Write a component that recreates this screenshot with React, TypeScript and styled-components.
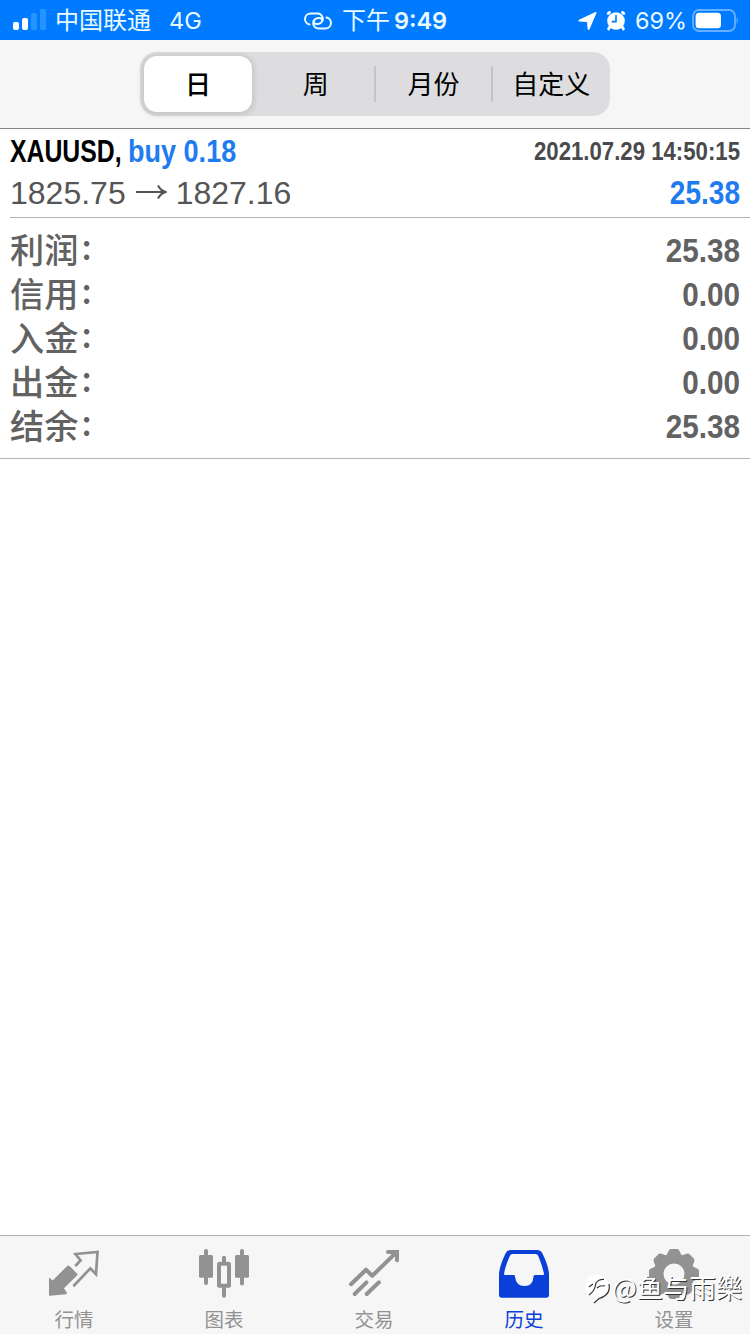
import React from "react";
import styled, { createGlobalStyle } from "styled-components";

const GlobalStyle = createGlobalStyle`
  * { box-sizing: border-box; }
  body { margin: 0; background: #fff; }
`;

const Screen = styled.div`
  position: relative;
  width: 750px;
  height: 1334px;
  display: flex;
  flex-direction: column;
  overflow: hidden;
  background: #fff;
  font-family: "Liberation Sans", "Noto Sans CJK SC", sans-serif;
`;

const StatusBar = styled.header`
  height: 40px;
  display: grid;
  grid-template-columns: 1fr auto 1fr;
  align-items: center;
  padding: 2px 12px 0 13px;
  background: #007aff;
  color: #e9fbff;
  font-family: Inter, "Noto Sans CJK SC", sans-serif;
  font-size: 24px;
  line-height: 38px;
`;

const StatusGroup = styled.div<{ $end?: boolean }>`
  display: flex;
  align-items: center;
  height: 38px;
  justify-content: ${(p) => (p.$end ? "flex-end" : "flex-start")};
`;

const Carrier = styled.span`
  margin-left: 8px;
  font-weight: 400;
`;

const Network = styled.span`
  margin-left: 18px;
  font-size: 23.5px;
`;

const Clock = styled.span`
  margin-left: 10px;
  font-weight: 400;
`;

const ClockDigits = styled.span`
  margin-left: 4px;
  font-weight: 600;
  font-size: 23.5px;
`;

const Percent = styled.span`
  margin: 0 5px 0 9px;
  font-size: 23.4px;
`;

const Toolbar = styled.nav`
  height: 89px;
  display: flex;
  justify-content: center;
  padding-top: 12px;
  background: #f6f6f6;
  border-bottom: 1px solid #858585;
`;

const Segments = styled.div`
  width: 470px;
  height: 64px;
  display: flex;
  align-items: center;
  padding: 4px 0 4px 4px;
  border-radius: 17px;
  background: #dddddf;
`;

const Segment = styled.button<{ $active?: boolean; $divider?: boolean }>`
  position: relative;
  flex: ${(p) => (p.$active ? "0 0 108px" : "1")};
  height: 56px;
  margin-right: ${(p) => (p.$active ? "5px" : "0")};
  padding: 0 0 2px;
  border: 0;
  border-radius: 13px;
  background: ${(p) => (p.$active ? "#fff" : "transparent")};
  box-shadow: ${(p) => (p.$active ? "0 1px 5px 3px rgba(0, 0, 0, 0.09)" : "none")};
  color: #000;
  font: ${(p) => (p.$active ? 500 : 400)} 26px/54px "Noto Sans CJK SC", sans-serif;

  &::after {
    content: "";
    display: ${(p) => (p.$divider ? "block" : "none")};
    position: absolute;
    right: -1px;
    top: 10px;
    width: 2px;
    height: 36px;
    background: #c4c4c7;
  }
`;

const Deal = styled.section`
  height: 89px;
  margin-left: 10px;
  padding: 0 10px 0 0;
  border-bottom: 1px solid #b4b4b4;
`;

const DealLine = styled.div<{ $height: number }>`
  display: flex;
  align-items: center;
  height: ${(p) => p.$height}px;
  line-height: ${(p) => p.$height}px;
`;

/* Bold condensed lettering: the glyphs are narrowed by $scale inside a box of $width. */
const Condensed = styled.span<{
  $width: number;
  $scale: number;
  $size: number;
  $color: string;
  $end?: boolean;
}>`
  display: flex;
  flex: none;
  justify-content: ${(p) => (p.$end ? "flex-end" : "flex-start")};
  width: ${(p) => p.$width}px;
  margin-left: ${(p) => (p.$end ? "auto" : "0")};
  color: ${(p) => p.$color};
  font-size: ${(p) => p.$size}px;
  font-weight: 700;
  white-space: nowrap;
  transform: scaleX(${(p) => p.$scale});
  transform-origin: ${(p) => (p.$end ? "right" : "left")} center;
`;

const Price = styled.span`
  padding-bottom: 1px;
  color: #555;
  font-size: 32px;
`;

const ArrowIcon = styled.svg`
  margin: 0 9px 2px;
`;

const Summary = styled.section`
  height: 241px;
  padding: 10px 10px 0;
  border-bottom: 1px solid #b4b4b4;
`;

const SummaryRow = styled.div`
  display: flex;
  align-items: center;
  height: 44px;
  line-height: 40px;
`;

const SummaryLabel = styled.span`
  display: flex;
  padding-bottom: 5px;
  color: #626262;
  font: 500 34.2px/36px "Noto Sans CJK SC", sans-serif;
`;

const Colon = styled.span`
  margin: -3px 0 3px 3px;
`;

const Spacer = styled.main`
  flex: 1;
`;

const TabBar = styled.footer`
  height: 99px;
  display: flex;
  background: #f6f6f6;
  border-top: 1px solid #b0b0b0;
`;

const Tab = styled.div<{ $active?: boolean }>`
  flex: 0 0 150px;
  padding: 11px 2px 0 0;
  display: flex;
  flex-direction: column;
  align-items: center;
  color: ${(p) => (p.$active ? "#0a3fd8" : "#929292")};
  font: 400 19.5px/24px "Noto Sans CJK SC", sans-serif;
`;

const TabIcon = styled.svg`
  display: block;
  margin-bottom: 9px;
  overflow: visible;
`;

const Watermark = styled.div`
  position: absolute;
  right: 8px;
  bottom: 33px;
  display: flex;
  align-items: center;
  height: 28px;
  color: #fff;
  font: 400 26.3px/28px "Noto Sans CJK SC", sans-serif;
  text-shadow: 1px 1px 0.5px #333;
  white-space: nowrap;
`;

const WatermarkLogo = styled.svg`
  margin: 3px 1px 0 0;
  overflow: visible;
`;

const SignalIcon = () => (
  <svg width="34" height="24" viewBox="0 0 34 24">
    <rect x="0" y="13" width="6" height="8" rx="2" fill="#fff" />
    <rect x="9" y="9" width="6" height="12" rx="2" fill="#fff" />
    <rect x="18" y="4" width="6" height="17" rx="1.5" fill="#2694ff" />
    <rect x="27" y="0" width="6" height="21" rx="1.5" fill="#2694ff" />
  </svg>
);

const LinkIcon = () => (
  <svg width="28" height="18" viewBox="0 0 28 18" fill="none" stroke="#e9fbff" strokeWidth="2" strokeLinecap="round">
    <path d="M5.5 12.4A5.5 5.5 0 0 1 6.5 1.5H13a5.3 5.3 0 0 1 1 10.6h-1.5a3 3 0 0 1-2.8-3" />
    <path d="M22.5 5.6a5.5 5.5 0 0 1-1 10.9H15A5.3 5.3 0 0 1 14 5.9h1.5a3 3 0 0 1 2.8 3" />
  </svg>
);

const LocationIcon = () => (
  <svg width="19" height="20" viewBox="0 0 19 20" fill="#fff">
    <path d="M1 8.8 17 1.2q2-.7 1.3 1.2L11.5 18.3q-1 1.7-1.9-.2L9 11 1.2 10.5q-1.6-.6-.2-1.7Z" />
  </svg>
);

const AlarmClock = styled.svg`
  margin: 0 0 2px 9px;
`;

const AlarmIcon = () => (
  <AlarmClock width="20" height="21" viewBox="0 0 20 21">
    <circle cx="10" cy="11" r="8.8" fill="#fff" />
    <path d="M2.2 3.4 3.6 2.4M16.4 2.4 17.8 3.4M3.4 17.4 2.6 19M16.6 17.4l.8 1.6" stroke="#fff" strokeWidth="2.8" strokeLinecap="round" />
    <path d="M10 5v6.6H5.6" fill="none" stroke="#007aff" strokeWidth="1.6" />
  </AlarmClock>
);

const BatteryIcon = () => (
  <svg width="46" height="24" viewBox="0 0 46 24">
    <rect x="1" y="1" width="42" height="21" rx="6" fill="none" stroke="#66b0ff" strokeWidth="1.8" />
    <rect x="3.6" y="3.8" width="25.4" height="15.4" rx="3.5" fill="#fff" />
    <path d="M44.6 8.3q2.6 3.2 0 6.5Z" fill="#66b0ff" />
  </svg>
);

const QuotesIcon = () => (
  <TabIcon width="50" height="51" viewBox="0 0 50 51">
    <path
      d="M0 30.4 3.7 33.4 18.2 19Q19.3 18 20.4 19L28 26.4Q29 27.4 28 28.4L15 41.3 18 46 17 47.2.8 48.7Q0 48.7 0 48Z"
      fill="currentColor"
    />
    <path d="M26.3 19 31.6 13.4 26.5 7 48.5 5 47 27.2 41.3 21.4 24.3 39.3" fill="none" stroke="currentColor" strokeWidth="2.7" />
  </TabIcon>
);

const ChartIcon = () => (
  <TabIcon width="50" height="51" viewBox="0 0 50 51" fill="currentColor">
    <rect x="0" y="8" width="14" height="22.7" rx="1.5" />
    <rect x="5" y="2" width="4" height="36" rx="2" />
    <rect x="36" y="8" width="14" height="22.7" rx="1.5" />
    <rect x="41" y="2" width="4" height="36.5" rx="2" />
    <rect x="23" y="8.7" width="4" height="8" rx="2" />
    <rect x="23" y="38" width="4" height="12.7" rx="2" />
    <rect x="20" y="16.8" width="10" height="22" rx="0.6" fill="none" stroke="currentColor" strokeWidth="4" />
  </TabIcon>
);

const TradeIcon = () => (
  <TabIcon width="50" height="51" viewBox="0 0 50 51" fill="none" stroke="currentColor" strokeWidth="4" strokeLinecap="round">
    <path d="M2 37.2 17 22.7 23.3 28.8 47 5.6" strokeLinejoin="round" />
    <path d="M39 4.9H48V13.3" />
    <path d="M5.7 47 17.5 35.3M17.7 47 30 35.3" />
  </TabIcon>
);

const HistoryIcon = () => (
  <TabIcon width="50" height="51" viewBox="0 0 50 51" fill="currentColor" fillRule="evenodd">
    <path d="M12 3H38Q42 3 43.5 6.5 50 20 50 28V48Q50 50.7 47.3 50.7H2.7Q0 50.7 0 48V28Q0 20 6.5 6.5 8 3 12 3ZM13.5 7Q11.5 7 10.8 9 6 20 5 27 5 28 6 28H15Q16 28 16 29.5 17 39 25.5 39 34 39 34.5 29.5 34.5 28 36 28H44Q45.3 28 45 27 43.5 19 39.3 9 38.5 7 36.5 7Z" />
  </TabIcon>
);

const SettingsIcon = () => (
  <TabIcon width="50" height="51" viewBox="0 0 50 51">
    <circle cx="25" cy="27" r="15.5" fill="none" stroke="currentColor" strokeWidth="10" />
    {[0, 45, 90, 135, 180, 225, 270, 315].map((angle) => (
      <path
        key={angle}
        d="M16.5 10.5 19.5 4Q20.3 2 22 2H28Q29.7 2 30.5 4L33.5 10.5Z"
        fill="currentColor"
        transform={`rotate(${angle} 25 27)`}
      />
    ))}
  </TabIcon>
);

const periods = ["日", "周", "月份", "自定义"];

const totals = [
  { label: "利润", value: "25.38", width: 74 },
  { label: "信用", value: "0.00", width: 58 },
  { label: "入金", value: "0.00", width: 58 },
  { label: "出金", value: "0.00", width: 58 },
  { label: "结余", value: "25.38", width: 74 },
];

const tabs = [
  { label: "行情", Icon: QuotesIcon },
  { label: "图表", Icon: ChartIcon },
  { label: "交易", Icon: TradeIcon },
  { label: "历史", Icon: HistoryIcon },
  { label: "设置", Icon: SettingsIcon },
];

export default function App() {
  return (
    <Screen>
      <GlobalStyle />
      <StatusBar>
        <StatusGroup>
          <SignalIcon />
          <Carrier>中国联通</Carrier>
          <Network>4G</Network>
        </StatusGroup>
        <StatusGroup>
          <LinkIcon />
          <Clock>下午</Clock>
          <ClockDigits>9:49</ClockDigits>
        </StatusGroup>
        <StatusGroup $end>
          <LocationIcon />
          <AlarmIcon />
          <Percent>69%</Percent>
          <BatteryIcon />
        </StatusGroup>
      </StatusBar>

      <Toolbar>
        <Segments>
          {periods.map((period, i) => (
            <Segment key={period} $active={i === 0} $divider={i === 1 || i === 2}>
              {period}
            </Segment>
          ))}
        </Segments>
      </Toolbar>

      <Deal>
        <DealLine $height={44}>
          <Condensed $width={118} $scale={0.775} $size={32} $color="#000">XAUUSD,</Condensed>
          <Condensed $width={108} $scale={0.845} $size={32} $color="#1f7cf0">buy 0.18</Condensed>
          <Condensed $end $width={206} $scale={0.86} $size={25.8} $color="#4a4a4c">2021.07.29 14:50:15</Condensed>
        </DealLine>
        <DealLine $height={40}>
          <Price>1825.75</Price>
          <ArrowIcon width="32" height="20" viewBox="0 0 32 20" fill="none" stroke="#555" strokeWidth="2">
            <path d="M1 10H30M23 3.5Q25.5 8.5 30.5 10 25.5 11.5 23 16.5" />
          </ArrowIcon>
          <Price>1827.16</Price>
          <Condensed $end $width={70} $scale={0.85} $size={33} $color="#1f7cf0">25.38</Condensed>
        </DealLine>
      </Deal>

      <Summary>
        {totals.map(({ label, value, width }) => (
          <SummaryRow key={label}>
            <SummaryLabel>
              {label}
              <Colon>:</Colon>
            </SummaryLabel>
            <Condensed $end $width={width} $scale={0.873} $size={34} $color="#626262">{value}</Condensed>
          </SummaryRow>
        ))}
      </Summary>

      <Spacer />

      <TabBar>
        {tabs.map(({ label, Icon }, i) => (
          <Tab key={label} $active={i === 3}>
            <Icon />
            {label}
          </Tab>
        ))}
      </TabBar>

      <Watermark>
        <WatermarkLogo width="26" height="28" viewBox="0 0 26 28">
          <path d="M0 11Q1 0 12 0 24 1 24 10 25 20 14 23L10 27Q8 27 9 22 0 20 0 11Z" fill="#fff" />
          <path d="M4 20Q10 16 11 8 14 4 19 4.5M4 12 8 9M12 13Q15 10 20 11M24 9Q26 20 14 23.5L9 28" fill="none" stroke="#333" strokeWidth="1.2" />
        </WatermarkLogo>
        @鱼与雨樂
      </Watermark>
    </Screen>
  );
}
